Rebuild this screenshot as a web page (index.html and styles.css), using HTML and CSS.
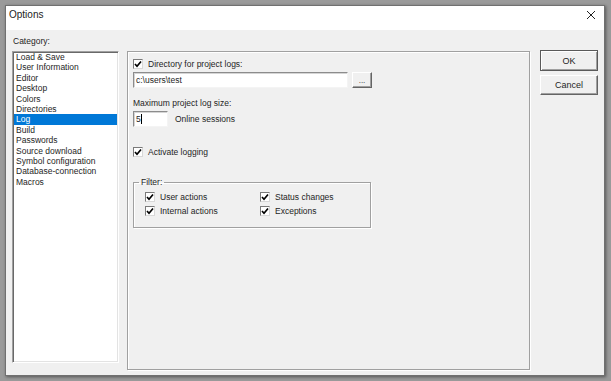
FILE: index.html
```html
<!DOCTYPE html>
<html>

<head>
  <title>Options</title>
  <link rel="stylesheet" href="styles.css">
</head>

<body>
  <div class="window">
    <div class="titlebar">
      <span class="title">Options</span>
      <svg class="close" width="10" height="10" viewBox="0 0 10 10">
        <path d="M1 1 L9 9 M9 1 L1 9" stroke="#222" stroke-width="1" fill="none" />
      </svg>
    </div>

    <div class="content">
      <div class="category">
        <div class="caption">Category:</div>
        <div class="listbox">
          <div class="item">Load &amp; Save</div>
          <div class="item">User Information</div>
          <div class="item">Editor</div>
          <div class="item">Desktop</div>
          <div class="item">Colors</div>
          <div class="item">Directories</div>
          <div class="item selected">Log</div>
          <div class="item">Build</div>
          <div class="item">Passwords</div>
          <div class="item">Source download</div>
          <div class="item">Symbol configuration</div>
          <div class="item">Database-connection</div>
          <div class="item">Macros</div>
        </div>
      </div>

      <div class="panel">
        <div class="check-row first">
          <span class="box"><svg viewBox="0 0 8 8"><polyline points="1,4 3,6.2 7,1.5" /></svg></span>
          <span>Directory for project logs:</span>
        </div>
        <div class="field-row">
          <div class="textbox path">c:\users\test</div>
          <div class="btn small">...</div>
        </div>

        <div class="label">Maximum project log size:</div>
        <div class="field-row">
          <div class="textbox size">5<span class="caret"></span></div>
          <span class="suffix">Online sessions</span>
        </div>

        <div class="check-row logging">
          <span class="box"><svg viewBox="0 0 8 8"><polyline points="1,4 3,6.2 7,1.5" /></svg></span>
          <span>Activate logging</span>
        </div>

        <fieldset class="filter">
          <legend>Filter:</legend>
          <div class="filter-grid">
            <div class="check-row">
              <span class="box"><svg viewBox="0 0 8 8"><polyline points="1,4 3,6.2 7,1.5" /></svg></span>
              <span>User actions</span>
            </div>
            <div class="check-row">
              <span class="box"><svg viewBox="0 0 8 8"><polyline points="1,4 3,6.2 7,1.5" /></svg></span>
              <span>Status changes</span>
            </div>
            <div class="check-row">
              <span class="box"><svg viewBox="0 0 8 8"><polyline points="1,4 3,6.2 7,1.5" /></svg></span>
              <span>Internal actions</span>
            </div>
            <div class="check-row">
              <span class="box"><svg viewBox="0 0 8 8"><polyline points="1,4 3,6.2 7,1.5" /></svg></span>
              <span>Exceptions</span>
            </div>
          </div>
        </fieldset>
      </div>

      <div class="buttons">
        <div class="btn default">OK</div>
        <div class="btn">Cancel</div>
      </div>
    </div>
  </div>
</body>

</html>
```

FILE: styles.css
```css
body {
  margin: 0;
  padding: 5px;
  background-color: #9a9a9a;
  font-family: "Liberation Sans", Arial, sans-serif;
  font-size: 8.5px;
  color: #1e1e1e;
  height: 381px;
  box-sizing: border-box;
  overflow: hidden;
}

.window {
  width: 600px;
  height: 371px;
  box-sizing: border-box;
  border: 1px solid #707070;
  background-color: #f0f0f0;
  box-shadow: 1px 1px 3px rgba(0, 0, 0, 0.45);
}

.titlebar {
  height: 24px;
  box-sizing: border-box;
  background-color: #fff;
  display: flex;
  align-items: flex-start;
  justify-content: space-between;
  padding: 3px 8px 0 3px;
}

.title {
  font-size: 10px;
  line-height: 12px;
  color: #222;
}

.close {
  display: block;
  margin-top: 1px;
}

.content {
  display: flex;
  align-items: flex-start;
  padding: 0 6px;
}

/* category list */

.category {
  width: 107px;
  padding-top: 6px;
}

.caption {
  height: 15px;
  line-height: 11px;
  padding-left: 1px;
}

.listbox {
  height: 312px;
  box-sizing: border-box;
  background-color: #fff;
  border: 1px solid;
  border-color: #a0a0a0 #fff #fff #a0a0a0;
  box-shadow: inset 1px 1px #696969, inset -1px -1px #e3e3e3;
  padding: 0 1px 0 1px;
}

.item {
  height: 10.4px;
  line-height: 10.4px;
  padding-left: 2px;
  white-space: nowrap;
}

.item.selected {
  background-color: #0078d7;
  color: #fff;
}

/* main panel */

.panel {
  width: 403px;
  height: 319px;
  box-sizing: border-box;
  margin: 21px 0 0 8px;
  border: 1px solid #a0a0a0;
  box-shadow: inset 1px 1px #fff, 1px 1px #fff;
  padding: 6px 0 0 5px;
}

.check-row {
  display: flex;
  align-items: center;
  height: 12px;
  white-space: nowrap;
}

.box {
  width: 10px;
  height: 10px;
  box-sizing: border-box;
  background-color: #fff;
  border: 1px solid;
  border-color: #7a7a7a #d8d8d8 #d8d8d8 #7a7a7a;
  margin-right: 5px;
  display: flex;
}

.box svg {
  width: 8px;
  height: 8px;
}

.box polyline {
  fill: none;
  stroke: #000;
  stroke-width: 1.7;
}

.field-row {
  display: flex;
  align-items: center;
  margin-top: 2px;
}

.textbox {
  height: 16px;
  box-sizing: border-box;
  background-color: #fff;
  border: 1px solid;
  border-color: #8c8c8c #f4f4f4 #f4f4f4 #8c8c8c;
  box-shadow: inset 1px 1px #d5d5d5;
  line-height: 14px;
  padding-left: 2px;
  display: flex;
  align-items: center;
}

.textbox.path {
  width: 215px;
}

.textbox.size {
  width: 35px;
}

.caret {
  display: inline-block;
  width: 1px;
  height: 10px;
  background-color: #000;
}

.suffix {
  margin-left: 7px;
}

.label {
  margin-top: 9px;
  height: 12px;
  line-height: 12px;
}

.check-row.logging {
  margin-top: 19px;
}

.filter {
  width: 238px;
  box-sizing: border-box;
  margin: 18px 0 0 0;
  padding: 0;
  border: 1px solid #a0a0a0;
  box-shadow: inset 1px 1px #fff, 1px 1px #fff;
}

.filter legend {
  margin-left: 5px;
  padding: 0 2px;
  height: 12px;
  line-height: 12px;
}

.filter-grid {
  display: grid;
  grid-template-columns: 115px auto;
  grid-auto-rows: 14px;
  align-items: center;
  padding: 2px 0 9px 11px;
}

.filter-grid .box {
  margin-right: 5px;
}

/* buttons */

.buttons {
  width: 58px;
  margin: 20px 0 0 10px;
  display: flex;
  flex-direction: column;
  gap: 4px;
}

.btn {
  height: 20px;
  box-sizing: border-box;
  background-color: #f0f0f0;
  border: 1px solid;
  border-color: #fff #646464 #646464 #fff;
  box-shadow: inset -1px -1px #a0a0a0;
  display: flex;
  align-items: center;
  justify-content: center;
  font-size: 9px;
}

.btn.default {
  height: 21px;
  border-color: #5a5a5a;
  box-shadow: inset 1px 1px #fff, inset -1px -1px #a0a0a0;
}

.btn.small {
  width: 20px;
  height: 16px;
  margin-left: 4px;
  font-size: 8px;
}
```
